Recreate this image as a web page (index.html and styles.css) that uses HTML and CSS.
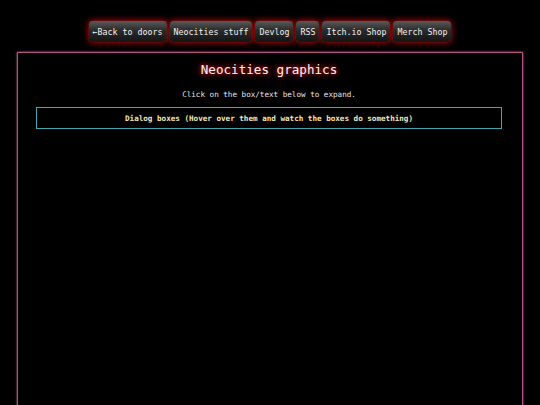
FILE: index.html
```html
<!DOCTYPE html>
<html>
<head>
<meta charset="utf-8">
<title>Neocities graphics</title>
<link rel="stylesheet" href="styles.css">
</head>
<body>
<nav class="nav">
  <a class="btn" href="#">&larr;Back to doors</a>
  <a class="btn" href="#">Neocities stuff</a>
  <a class="btn" href="#">Devlog</a>
  <a class="btn" href="#">RSS</a>
  <a class="btn" href="#">Itch.io Shop</a>
  <a class="btn" href="#">Merch Shop</a>
</nav>
<main class="panel">
  <h1 class="title">Neocities graphics</h1>
  <p class="hint">Click on the box/text below to expand.</p>
  <div class="dropbox">Dialog boxes (Hover over them and watch the boxes do something)</div>
</main>
</body>
</html>
```

FILE: styles.css
```css
html, body {
  margin: 0;
  padding: 0;
  background: #000;
  height: 100%;
  overflow: hidden;
}

body {
  font-family: "DejaVu Sans Mono", "Liberation Mono", monospace;
  color: #e8e8e8;
}

.nav {
  display: flex;
  justify-content: center;
  gap: 3px;
  padding-top: 21px;
}

.btn {
  display: flex;
  align-items: center;
  height: 21px;
  padding: 0 4px;
  border-radius: 4px;
  background: linear-gradient(#5a5a5a 0%, #2a2a2a 45%, #141414 100%);
  box-shadow: 0 0 6px 1px #9c0c0c, 0 0 1px #ff4040;
  color: #f2f2f2;
  font-size: 8.3px;
  text-decoration: none;
  white-space: nowrap;
}

.panel {
  margin: 10px 17px 0;
  height: 400px;
  border: 1px solid #b4507f;
  box-shadow: 0 0 2px #d06898;
  padding: 0 20px 0 18px;
  text-align: center;
}

.title {
  margin: 0;
  padding-top: 8px;
  font-size: 12.6px;
  font-weight: normal;
  line-height: 18px;
  color: #fff4f4;
  text-shadow: 0 0 4px #ff2020, 0 0 8px #a00000;
}

.hint {
  margin: 10px 0 0;
  font-size: 7.6px;
  line-height: 12px;
  color: #e6e6e6;
}

.dropbox {
  margin-top: 6px;
  height: 20px;
  border: 1px solid #3aa9b2;
  display: flex;
  align-items: center;
  justify-content: center;
  font-size: 7.6px;
  font-weight: bold;
  color: #f4e6bc;
}
```
